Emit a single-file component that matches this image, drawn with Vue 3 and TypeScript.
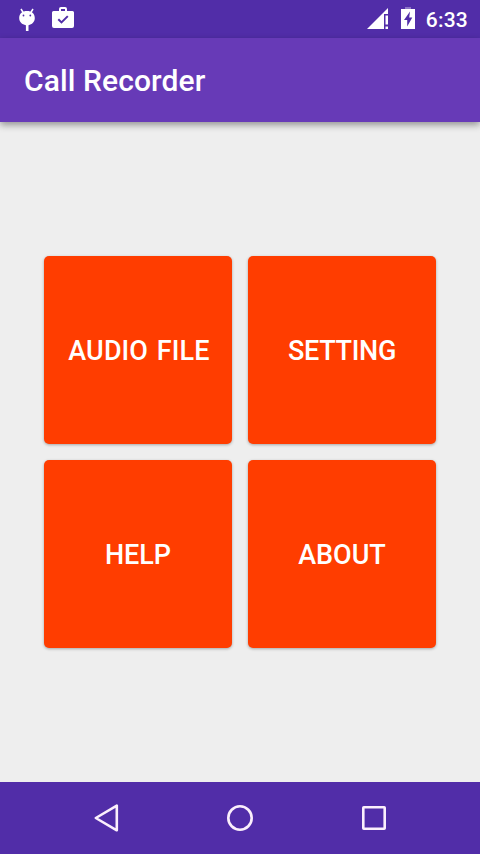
<!-- src/App.vue -->
<template>
    <div class="screen">
        <header class="status-bar">
            <div class="status-left">
                <svg class="icon-debug" width="18" height="26" viewBox="0 0 18 26">
                    <path d="M3 2l2.500 4M15 2l-2.500 4" stroke="#fff" stroke-width="1.500" />
                    <path
                        d="M1.200 11C1.200 6.600 4.500 4 9 4s7.800 2.600 7.800 7c0 4-2.800 6.500-6.300 7.200V24h-2.600v-5.800C4 17.500 1.200 15 1.200 11z"
                        fill="#fff" />
                    <circle cx="5.500" cy="8.500" r=".9" fill="#512da8" />
                    <circle cx="12.300" cy="8.500" r=".9" fill="#512da8" />
                </svg>
                <svg class="icon-store" width="22" height="24" viewBox="0 0 22 24">
                    <path fill-rule="evenodd"
                        d="M7 5V3a2 2 0 0 1 2-2h4a2 2 0 0 1 2 2v2h5.500a1.500 1.500 0 0 1 1.500 1.500v13.500a2 2 0 0 1-2 2H2a2 2 0 0 1-2-2V6.500A1.500 1.500 0 0 1 1.500 5zM9 5h4V3H9z"
                        fill="#fff" />
                    <path d="M6.300 13.200l3.200 3.200 6.300-6.300" fill="none" stroke="#512da8" stroke-width="2" />
                </svg>
            </div>
            <div class="status-right">
                <svg class="icon-signal" width="22" height="22" viewBox="0 0 22 22">
                    <path d="M0 21L21 0V6H17V21z" fill="#fff" />
                    <path d="M18.500 7.500H21v9h-2.500zM18.500 18.500H21V21h-2.500z" fill="#fff" />
                </svg>
                <svg class="icon-battery" width="14" height="22" viewBox="0 0 14 22">
                    <path d="M4 0h6v2H4z" fill="#fff" opacity=".35" />
                    <path d="M0 2h14v20H0z" fill="#fff" />
                    <path d="M9 4.500L3 13h3.200v6.500L11.300 10.500H8.200z" fill="#512da8" />
                </svg>
                <span class="clock">6:33</span>
            </div>
        </header>

        <div class="app-bar">
            <h1 class="title">Call Recorder</h1>
        </div>

        <main class="content">
            <div class="menu-grid">
                <button v-for="item in menuItems" :key="item.name" class="menu-btn" :class="item.name">
                    {{ item.label }}
                </button>
            </div>
        </main>

        <nav class="nav-bar">
            <button class="nav-btn" aria-label="Back">
                <svg width="32" height="32" viewBox="0 0 32 32">
                    <path d="M5.800 16L26.800 3.700v24.600z" />
                </svg>
            </button>
            <button class="nav-btn" aria-label="Home">
                <svg width="32" height="32" viewBox="0 0 32 32">
                    <circle cx="16" cy="16" r="11.700" />
                </svg>
            </button>
            <button class="nav-btn" aria-label="Recents">
                <svg width="32" height="32" viewBox="0 0 32 32">
                    <rect x="5.300" y="5.300" width="21.400" height="21.400" rx=".5" />
                </svg>
            </button>
        </nav>
    </div>
</template>

<script setup lang="ts">
interface MenuItem {
    name: string
    label: string
}

const menuItems: MenuItem[] = [
    { name: 'audio', label: 'AUDIO FILE' },
    { name: 'setting', label: 'SETTING' },
    { name: 'help', label: 'HELP' },
    { name: 'about', label: 'ABOUT' }
]
</script>

<style>
body {
    margin: 0;
}
</style>

<style scoped>
.screen {
    display: flex;
    flex-direction: column;
    width: 480px;
    height: 854px;
    background: #eee;
    font-family: Roboto, "Liberation Sans", sans-serif;
    overflow: hidden;
}

.status-bar {
    display: flex;
    justify-content: space-between;
    height: 38px;
    padding: 0 12px 0 18px;
    box-sizing: border-box;
    background: #512da8;
}

.status-left,
.status-right {
    display: flex;
    align-items: center;
}

.status-left {
    gap: 16px;
}

.icon-debug {
    margin-top: 2px;
}

.icon-store {
    margin-bottom: 2px;
}

.icon-signal {
    margin-right: 12px;
}

.icon-battery {
    margin-right: 11px;
    margin-bottom: 2px;
}

.clock {
    color: #fff;
    font-size: 21px;
    font-weight: 500;
    letter-spacing: .2px;
    line-height: 38px;
    padding-top: 2px;
}

.app-bar {
    display: flex;
    align-items: center;
    height: 84px;
    padding: 0 24px;
    background: #673ab7;
    box-shadow: 0 3px 7px rgba(0, 0, 0, .38);
}

.title {
    margin: 0;
    color: #fff;
    font-size: 30px;
    font-weight: 500;
    letter-spacing: .1px;
}

.content {
    flex: 1;
    display: flex;
    align-items: center;
    justify-content: center;
}

.menu-grid {
    display: grid;
    grid-template-columns: repeat(2, 188px);
    grid-auto-rows: 188px;
    gap: 16px;
}

.menu-btn {
    padding: 2px 0 0;
    border: none;
    border-radius: 5px;
    background: #ff3d00;
    color: #fff;
    font-family: inherit;
    font-size: 27px;
    font-weight: 500;
    cursor: pointer;
    box-shadow: 0 1px 3px rgba(0, 0, 0, .3);
}

.menu-btn.audio {
    padding-left: 2px;
    letter-spacing: .1px;
    word-spacing: 2px;
}

.menu-btn.setting {
    letter-spacing: -.3px;
}

.nav-bar {
    display: flex;
    align-items: center;
    justify-content: center;
    gap: 102px;
    height: 72px;
    background: #512da8;
}

.nav-btn {
    display: flex;
    padding: 0;
    border: none;
    background: none;
    cursor: pointer;
}

.nav-btn svg {
    fill: none;
    stroke: #fbeffc;
    stroke-width: 2.6;
    stroke-linejoin: round;
}
</style>
